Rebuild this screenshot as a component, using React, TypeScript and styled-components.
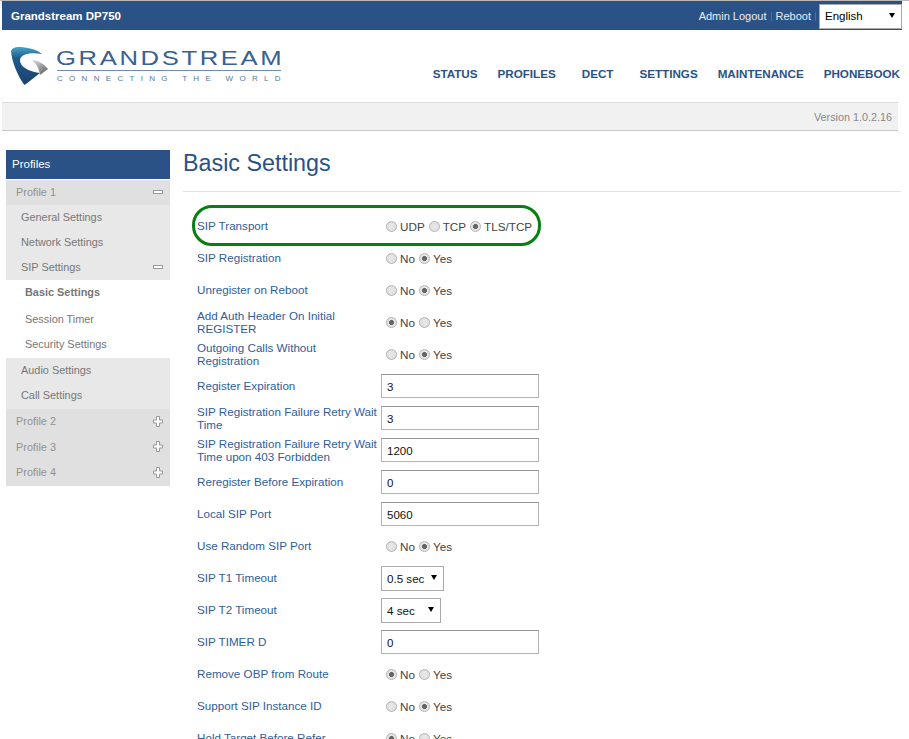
import { FC } from "react";
import styled, { createGlobalStyle } from "styled-components";

const BLUE = "#2a5286";
const LINK = "#2f5d9b";

const GlobalStyle = createGlobalStyle`
    html, body {
        margin: 0;
        padding: 0;
        height: 739px;
        overflow: hidden;
        background: #fff;
        font-family: "Liberation Sans", Arial, sans-serif;
    }
`;

const Page = styled.div`
    width: 909px;
    height: 739px;
    overflow: hidden;
    border-top: 1px solid #b8b8b8;
    box-sizing: border-box;
`;

const TopBar = styled.div`
    margin-left: 2px;
    width: 900px;
    height: 29px;
    background: ${BLUE};
    display: flex;
    align-items: center;
    justify-content: space-between;
    box-sizing: border-box;
    padding-left: 9px;
`;

const ProductName = styled.div`
    color: #fff;
    font-size: 11.5px;
    font-weight: bold;
`;

const TopActions = styled.div`
    display: flex;
    align-items: center;
    color: #e8eef6;
    font-size: 11px;
`;

const TopLink = styled.span`
    margin: 2px 4px 0 0;
    padding-right: 4px;
    border-right: 1px solid #4a6e9c;
    line-height: 9px;
`;

const SecondLink = styled(TopLink)`
    margin-right: 3px;
`;

const LanguageSelect = styled.div`
    width: 83px;
    height: 25px;
    margin-top: 1px;
    box-sizing: border-box;
    border: 1px solid #a9a9a9;
    background: #fff;
    color: #000;
    font-size: 11.5px;
    display: flex;
    align-items: center;
    justify-content: space-between;
    padding: 0 6px 0 5px;
`;

const Caret = styled.span`
    width: 0;
    height: 0;
    border-left: 3px solid transparent;
    border-right: 3px solid transparent;
    border-top: 5px solid #000;
    margin-top: -1px;
`;

const Header = styled.div`
    height: 72px;
    margin-left: 2px;
    width: 900px;
    display: flex;
    justify-content: space-between;
    box-sizing: border-box;
    padding: 17px 2px 0 9px;
`;

const LogoWrap = styled.div`
    display: flex;
    align-items: flex-start;
    gap: 8px;
`;

const LogoText = styled.div`
    display: flex;
    flex-direction: column;
    width: 224px;
    color: #3a6090;
    padding-top: 2px;
`;

const LogoName = styled.div`
    font-size: 20.5px;
    line-height: 18px;
    letter-spacing: 2.1px;
    white-space: nowrap;
    height: 20px;
    margin-left: -1px;
    transform: scaleX(1.25);
    transform-origin: left center;
`;

const LogoRule = styled.div`
    height: 1px;
    background: #6c8cb4;
    margin-top: 1px;
`;

const LogoTag = styled.div`
    font-size: 8px;
    line-height: 9px;
    letter-spacing: 6.3px;
    margin-top: 3px;
    white-space: nowrap;
    color: #54779f;
`;

const Nav = styled.nav`
    display: flex;
    gap: 20px;
    padding-top: 20px;
`;

const NavItem = styled.span<{ $pad?: number }>`
    color: ${BLUE};
    font-size: 11.65px;
    font-weight: bold;
    line-height: 14px;
    padding: 0 ${({ $pad }) => $pad || 0}px;
`;

const VersionBar = styled.div`
    margin-left: 2px;
    width: 896px;
    height: 29px;
    box-sizing: border-box;
    background: #f1f1f1;
    border-top: 1px solid #dcdcdc;
    border-bottom: 1px solid #c8c8c8;
    display: flex;
    align-items: center;
    justify-content: flex-end;
    padding-right: 6px;
    color: #888;
    font-size: 10.8px;
`;

const Body = styled.div`
    display: flex;
    padding: 19px 0 0 6px;
`;

const Sidebar = styled.aside`
    width: 164px;
    flex: none;
    font-size: 10.9px;
    color: #888;
`;

const SideTitle = styled.div`
    height: 29px;
    box-sizing: border-box;
    background: ${BLUE};
    color: #fff;
    font-size: 11.5px;
    display: flex;
    align-items: center;
    padding: 0 0 2px 6px;
    margin-bottom: 1px;
`;

const SideRow = styled.div<{ $height: number; $indent: number; $bg: string; $lift?: number; $dark?: boolean; $bold?: boolean }>`
    height: ${({ $height }) => $height}px;
    box-sizing: border-box;
    background: ${({ $bg }) => $bg};
    padding: 0 7px ${({ $lift }) => $lift ?? 1}px ${({ $indent }) => $indent}px;
    display: flex;
    align-items: center;
    justify-content: space-between;
    color: ${({ $dark }) => ($dark ? "#777" : "#919191")};
    font-weight: ${({ $bold }) => ($bold ? "bold" : "normal")};
`;

const MinusIcon = styled.span`
    width: 8px;
    height: 2px;
    border: 1px solid #9a9a9a;
    background: #fff;
`;

const PlusIcon: FC = () => (
    <svg width="10" height="11" viewBox="0 0 10 11">
        <path d="M3.5.5h3v3.5h3v3h-3v3.5h-3V7h-3V4h3z" fill="#fff" stroke="#999" />
    </svg>
);

const Main = styled.main`
    flex: 1;
    padding-left: 13px;
    min-width: 0;
`;

const Title = styled.h1`
    margin: 0;
    height: 41px;
    font-size: 23.3px;
    font-weight: normal;
    line-height: 26px;
    color: ${BLUE};
    border-bottom: 1px solid #e2e2e2;
    width: 718px;
    padding-bottom: 0;
`;

const Form = styled.div`
    padding: 18px 0 0 14px;
`;

const Row = styled.div`
    position: relative;
    height: 32px;
    display: flex;
    align-items: center;
`;

const RowLabel = styled.div`
    width: 184px;
    flex: none;
    font-size: 11.65px;
    line-height: 13px;
    color: ${LINK};
    margin-top: -1px;
`;

const Highlight = styled.div`
    position: absolute;
    left: -5px;
    top: -5px;
    width: 349px;
    height: 41px;
    box-sizing: border-box;
    border: 3px solid #087f12;
    border-radius: 20px;
`;

const RadioGroup = styled.div`
    display: flex;
    align-items: center;
    padding-left: 5px;
    font-size: 11.7px;
    color: #444;
`;

const RadioOption = styled.div`
    display: flex;
    align-items: center;
    margin-right: 4px;
`;

const RadioDot = styled.span<{ $checked?: boolean }>`
    width: 11px;
    height: 11px;
    box-sizing: border-box;
    border-radius: 50%;
    background: radial-gradient(
        circle,
        ${({ $checked }) => ($checked ? "#666 0 2.2px, #e4e4e4 2.8px" : "#e9e9e9 0, #dcdcdc 100%")}
    );
    border: 1px solid #b4b4b4;
    margin-right: 3px;
`;

const TextField = styled.div`
    width: 158px;
    height: 24px;
    box-sizing: border-box;
    border: 1px solid #b4b4b4;
    border-top-color: #969696;
    padding: 2px 5px 0;
    display: flex;
    align-items: center;
    font-size: 11.5px;
    color: #111;
`;

const SelectField = styled.div<{ $width: number }>`
    width: ${({ $width }) => $width}px;
    height: 25px;
    box-sizing: border-box;
    border: 1px solid #a9a9a9;
    padding: 0 6px 0 5px;
    display: flex;
    align-items: center;
    justify-content: space-between;
    font-size: 11.6px;
    color: #111;
`;

type Field =
    | { label: string; kind: "radio"; options: string[]; checked: number }
    | { label: string; kind: "text"; value: string }
    | { label: string; kind: "select"; value: string; width: number };

const yesNo = (label: string, checked: number): Field => ({ label, kind: "radio", options: ["No", "Yes"], checked });
const text = (label: string, value: string): Field => ({ label, kind: "text", value });

const FIELDS: Field[] = [
    { label: "SIP Transport", kind: "radio", options: ["UDP", "TCP", "TLS/TCP"], checked: 2 },
    yesNo("SIP Registration", 1),
    yesNo("Unregister on Reboot", 1),
    yesNo("Add Auth Header On Initial REGISTER", 0),
    yesNo("Outgoing Calls Without Registration", 1),
    text("Register Expiration", "3"),
    text("SIP Registration Failure Retry Wait Time", "3"),
    text("SIP Registration Failure Retry Wait Time upon 403 Forbidden", "1200"),
    text("Reregister Before Expiration", "0"),
    text("Local SIP Port", "5060"),
    yesNo("Use Random SIP Port", 1),
    { label: "SIP T1 Timeout", kind: "select", value: "0.5 sec", width: 63 },
    { label: "SIP T2 Timeout", kind: "select", value: "4 sec", width: 60 },
    text("SIP TIMER D", "0"),
    yesNo("Remove OBP from Route", 0),
    yesNo("Support SIP Instance ID", 1),
    yesNo("Hold Target Before Refer", 0),
];

type SideItem = {
    label: string;
    height: number;
    indent: number;
    bg: string;
    lift?: number;
    icon?: "minus" | "plus";
    dark?: boolean;
    bold?: boolean;
};

const SIDE_ITEMS: SideItem[] = [
    { label: "Profile 1", height: 25, indent: 10, bg: "#e0e0e0", icon: "minus" },
    { label: "General Settings", height: 25, indent: 15, bg: "#e8e8e8", dark: true },
    { label: "Network Settings", height: 25, indent: 15, bg: "#e8e8e8", dark: true },
    { label: "SIP Settings", height: 25, indent: 15, bg: "#e8e8e8", icon: "minus", dark: true },
    { label: "Basic Settings", height: 25, indent: 19, bg: "#fff", dark: true, bold: true },
    { label: "Session Timer", height: 28, indent: 19, bg: "#fff", dark: true },
    { label: "Security Settings", height: 25, indent: 19, bg: "#fff", dark: true, lift: 3 },
    { label: "Audio Settings", height: 25, indent: 15, bg: "#e8e8e8", dark: true },
    { label: "Call Settings", height: 26, indent: 15, bg: "#e8e8e8", dark: true, lift: 2 },
    { label: "Profile 2", height: 25, indent: 10, bg: "#e0e0e0", icon: "plus" },
    { label: "Profile 3", height: 26, indent: 10, bg: "#e0e0e0", icon: "plus" },
    { label: "Profile 4", height: 26, indent: 10, bg: "#e0e0e0", icon: "plus", lift: 2 },
];

const Logo: FC = () => (
    <svg width="38" height="39" viewBox="0 0 38 39">
        <defs>
            <linearGradient id="logoBlue" x1="0" y1="0" x2="0" y2="1">
                <stop offset="0" stopColor="#45a5c4" />
                <stop offset="0.3" stopColor="#1d5a8c" />
                <stop offset="1" stopColor="#1d3f6e" />
            </linearGradient>
            <linearGradient id="logoGrey" x1="0" y1="0" x2="1" y2="1">
                <stop offset="0" stopColor="#e8e8e8" />
                <stop offset="1" stopColor="#555" />
            </linearGradient>
        </defs>
        <path
            d="M0 4C1 1 4 0 7 0 16 0 25 2 31 7 24 6 17 6 13 8 9 10 8 13 10 17 12 21 20 25 29 26L15 37C14 38 13 38 12 36 6 27 1 15 0 4Z"
            fill="url(#logoBlue)"
        />
        <path d="M20 13C27 13 33 17 37 22L29 28C28 21 25 16 20 13Z" fill="url(#logoGrey)" />
    </svg>
);

const renderControl = (field: Field) => {
    if (field.kind === "text") {
        return <TextField>{field.value}</TextField>;
    }
    if (field.kind === "select") {
        return (
            <SelectField $width={field.width}>
                {field.value}
                <Caret />
            </SelectField>
        );
    }
    return (
        <RadioGroup>
            {field.options.map((option, index) => (
                <RadioOption key={option}>
                    <RadioDot $checked={index === field.checked} />
                    <span>{option}</span>
                </RadioOption>
            ))}
        </RadioGroup>
    );
};

const App: FC = () => (
    <Page>
        <GlobalStyle />
        <TopBar>
            <ProductName>Grandstream DP750</ProductName>
            <TopActions>
                <TopLink>Admin Logout</TopLink>
                <SecondLink>Reboot</SecondLink>
                <LanguageSelect>
                    English
                    <Caret />
                </LanguageSelect>
            </TopActions>
        </TopBar>
        <Header>
            <LogoWrap>
                <Logo />
                <LogoText>
                    <LogoName>GRANDSTREAM</LogoName>
                    <LogoRule />
                    <LogoTag>CONNECTING THE WORLD</LogoTag>
                </LogoText>
            </LogoWrap>
            <Nav>
                <NavItem>STATUS</NavItem>
                <NavItem>PROFILES</NavItem>
                <NavItem $pad={6}>DECT</NavItem>
                <NavItem>SETTINGS</NavItem>
                <NavItem>MAINTENANCE</NavItem>
                <NavItem>PHONEBOOK</NavItem>
            </Nav>
        </Header>
        <VersionBar>Version 1.0.2.16</VersionBar>
        <Body>
            <Sidebar>
                <SideTitle>Profiles</SideTitle>
                {SIDE_ITEMS.map((item) => (
                    <SideRow
                        key={item.label}
                        $height={item.height}
                        $indent={item.indent}
                        $bg={item.bg}
                        $lift={item.lift}
                        $dark={item.dark}
                        $bold={item.bold}
                    >
                        {item.label}
                        {item.icon === "minus" && <MinusIcon />}
                        {item.icon === "plus" && <PlusIcon />}
                    </SideRow>
                ))}
            </Sidebar>
            <Main>
                <Title>Basic Settings</Title>
                <Form>
                    {FIELDS.map((field, index) => (
                        <Row key={field.label}>
                            {index === 0 && <Highlight />}
                            <RowLabel>{field.label}</RowLabel>
                            {renderControl(field)}
                        </Row>
                    ))}
                </Form>
            </Main>
        </Body>
    </Page>
);

export default App;
